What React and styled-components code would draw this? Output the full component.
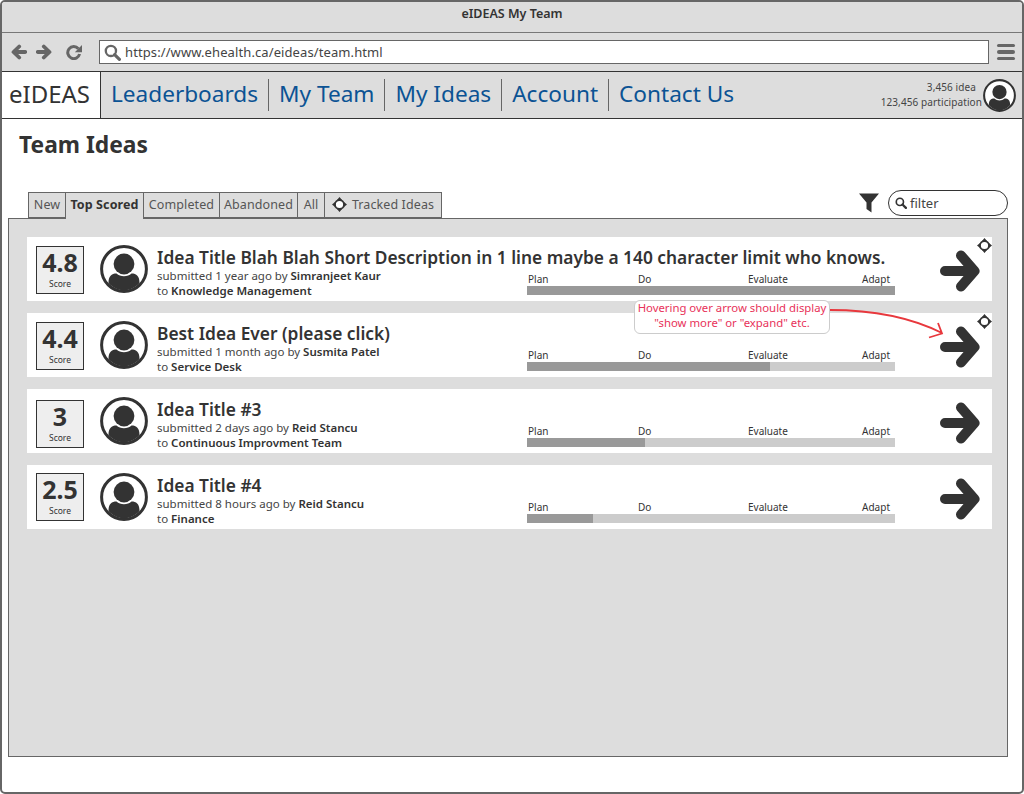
import React from "react";
import styled, { createGlobalStyle } from "styled-components";

const FONT = `"Noto Sans", "Open Sans", sans-serif`;

const IDEAS = [
  {
    score: "4.8",
    scoreTop: 9,
    title: "Idea Title Blah Blah Short Description in 1 line maybe a 140 character limit who knows.",
    when: "1 year ago",
    author: "Simranjeet Kaur",
    team: "Knowledge Management",
    progress: 100,
    tracked: true,
  },
  {
    score: "4.4",
    scoreTop: 9,
    title: "Best Idea Ever (please click)",
    when: "1 month ago",
    author: "Susmita Patel",
    team: "Service Desk",
    progress: 66,
    tracked: true,
  },
  {
    score: "3",
    scoreTop: 11,
    title: "Idea Title #3",
    when: "2 days ago",
    author: "Reid Stancu",
    team: "Continuous Improvment Team",
    progress: 32,
  },
  {
    score: "2.5",
    scoreTop: 8,
    title: "Idea Title #4",
    when: "8 hours ago",
    author: "Reid Stancu",
    team: "Finance",
    progress: 18,
  },
];

const TABS = [
  { label: "New", width: 38 },
  { label: "Top Scored", width: 79, active: true },
  { label: "Completed", width: 77 },
  { label: "Abandoned", width: 79 },
  { label: "All", width: 28 },
  { label: "Tracked Ideas", width: 118, icon: true },
];

const NAV_LINKS = ["Leaderboards", "My Team", "My Ideas", "Account", "Contact Us"];

const MoveIcon = () => (
  <svg width="15" height="15" viewBox="0 0 15 15">
    <circle cx="7.5" cy="7.5" r="4.500" fill="#fff" stroke="#333" strokeWidth="1.800" />
    <path d="M7.500 0l2.500 3.100H5zM7.500 15l2.500-3.100H5zM0 7.500l3.100-2.500v5zM15 7.500l-3.100-2.500v5z" fill="#333" />
  </svg>
);

const Avatar = ({ size }) => (
  <svg width={size} height={size} viewBox="0 0 48 48">
    <circle cx="24" cy="24" r="22.400" fill="#fff" stroke="#333" strokeWidth="3" />
    <circle cx="24" cy="19" r="10.400" fill="#333" />
    <path d="M8.500 38c0-7 3-9.500 8-9.500 2 1.800 4.600 2.700 7.500 2.700s5.500-.9 7.500-2.700c5 0 8 2.500 8 9.500-4 4.600-9.500 7.300-15.500 7.300S12.500 42.600 8.500 38z" fill="#333" />
  </svg>
);

const BigArrow = () => (
  <svg width="40" height="42" viewBox="0 0 40 42">
    <path
      d="M5 21H33M21 5.500L34.500 21L21 36.500"
      fill="none"
      stroke="#333"
      strokeWidth="10"
      strokeLinecap="round"
      strokeLinejoin="round"
    />
  </svg>
);

const BackIcon = () => (
  <svg width="16" height="16" viewBox="0 0 16 16">
    <path
      d="M14.200 8H3M8.200 2.500L2.500 8L8.200 13.500"
      fill="none"
      stroke="#666"
      strokeWidth="3.800"
      strokeLinecap="round"
      strokeLinejoin="round"
    />
  </svg>
);

const ForwardIcon = () => (
  <svg width="16" height="16" viewBox="0 0 16 16">
    <path
      d="M1.800 8H13M7.800 2.500L13.500 8L7.800 13.500"
      fill="none"
      stroke="#666"
      strokeWidth="3.800"
      strokeLinecap="round"
      strokeLinejoin="round"
    />
  </svg>
);

const RefreshIcon = () => (
  <svg width="16" height="16" viewBox="0 0 16 16">
    <path d="M12.400 4.800A6 6 0 1 0 13.600 10" fill="none" stroke="#666" strokeWidth="3" />
    <path d="M16 1v7.200H8.800z" fill="#666" />
  </svg>
);

const SearchIcon = ({ size, color }) => (
  <svg width={size} height={size} viewBox="0 0 16 16">
    <circle cx="6.500" cy="6.500" r="4.800" fill="none" stroke={color} strokeWidth="2.200" />
    <path d="M10 10l4.500 4.500" fill="none" stroke={color} strokeWidth="3" strokeLinecap="round" />
  </svg>
);

const FunnelIcon = () => (
  <svg width="20" height="20" viewBox="0 0 20 20">
    <path d="M0 .5H20L12.500 9.500V19.500L7.500 16V9.500z" fill="#333" />
  </svg>
);

const Idea = ({ idea }) => (
  <Row>
    <ScoreBox $top={idea.scoreTop}>
      <ScoreValue>{idea.score}</ScoreValue>
      <ScoreLabel>Score</ScoreLabel>
    </ScoreBox>
    <RowAvatar>
      <Avatar size={48} />
    </RowAvatar>
    <RowBody>
      <IdeaTitle>{idea.title}</IdeaTitle>
      <RowLower>
        <Meta>
          <div>
            submitted {idea.when} by <strong>{idea.author}</strong>
          </div>
          <div>
            to <strong>{idea.team}</strong>
          </div>
        </Meta>
        <Progress>
          <Stages>
            <span>Plan</span>
            <span>Do</span>
            <span>Evaluate</span>
            <span>Adapt</span>
          </Stages>
          <Track>
            <Fill style={{ width: `${idea.progress}%` }} />
          </Track>
        </Progress>
      </RowLower>
    </RowBody>
    <ArrowCell>
      <BigArrow />
    </ArrowCell>
    {idea.tracked && (
      <TrackBadge>
        <MoveIcon />
      </TrackBadge>
    )}
  </Row>
);

export default function App() {
  return (
    <>
      <GlobalStyle />
      <Browser>
        <TitleBar>eIDEAS My Team</TitleBar>
        <AddressRow>
          <ToolIcon $after={9}>
            <BackIcon />
          </ToolIcon>
          <ToolIcon $after={14}>
            <ForwardIcon />
          </ToolIcon>
          <ToolIcon $after={17}>
            <RefreshIcon />
          </ToolIcon>
          <AddressBar>
            <SearchIcon size={17} color="#666" />
            https://www.ehealth.ca/eideas/team.html
          </AddressBar>
          <Burger>
            <span />
            <span />
            <span />
          </Burger>
        </AddressRow>
        <NavBar>
          <Brand>eIDEAS</Brand>
          <NavLinks>
            {NAV_LINKS.map((link) => (
              <NavLink key={link}>{link}</NavLink>
            ))}
          </NavLinks>
          <Stats>
            <StatIdea>3,456 idea</StatIdea>
            <div>123,456 participation</div>
          </Stats>
          <Avatar size={33} />
        </NavBar>
        <Content>
          <PageTitle>Team Ideas</PageTitle>
          <TabBar>
            <Tabs>
              {TABS.map((tab) => (
                <Tab key={tab.label} $width={tab.width} $active={tab.active}>
                  {tab.icon && <MoveIcon />}
                  {tab.label}
                </Tab>
              ))}
            </Tabs>
            <FilterBox>
              <FunnelIcon />
              <FilterInput>
                <SearchIcon size={12} color="#333" />
                filter
              </FilterInput>
            </FilterBox>
          </TabBar>
          <Panel>
            {IDEAS.map((idea) => (
              <Idea key={idea.title} idea={idea} />
            ))}
            <Note>
              <NoteText>
                Hovering over arrow should display
                <br />
                "show more" or "expand" etc.
              </NoteText>
            </Note>
            <NoteArrow width="116" height="34" viewBox="0 0 116 34">
              <path
                d="M0 2C40 2 80 9 112 25M99 29.500L112 25.500L108 15"
                fill="none"
                stroke="#e8383d"
                strokeWidth="1.800"
              />
            </NoteArrow>
          </Panel>
        </Content>
      </Browser>
    </>
  );
}

const GlobalStyle = createGlobalStyle`
  html, body {
    margin: 0;
    padding: 0;
    background: #fff;
  }
  body {
    font-family: ${FONT};
    color: #333;
  }
`;

const Browser = styled.div`
  box-sizing: border-box;
  width: 1024px;
  height: 794px;
  border: 2px solid #666;
  border-radius: 5px;
  overflow: hidden;
`;

const TitleBar = styled.div`
  height: 31px;
  padding-bottom: 8px;
  box-sizing: border-box;
  background: #ddd;
  border-bottom: 1px solid #777;
  display: flex;
  align-items: center;
  justify-content: center;
  font-size: 12.500px;
  font-weight: 600;
`;

const AddressRow = styled.div`
  height: 38px;
  box-sizing: border-box;
  background: #ddd;
  display: flex;
  align-items: center;
  padding: 0 7px 0 9px;
`;

const ToolIcon = styled.div`
  width: 16px;
  height: 16px;
  line-height: 0;
  margin-right: ${({ $after }) => $after}px;
  flex: none;
`;

const AddressBar = styled.div`
  flex: 1;
  height: 24px;
  box-sizing: border-box;
  margin-right: 8px;
  background: #fff;
  border: 1px solid #666;
  display: flex;
  align-items: center;
  gap: 4px;
  padding: 0 4px;
  font-size: 13px;
  letter-spacing: 0.1px;
  color: #444;
`;

const Burger = styled.div`
  width: 18px;
  display: flex;
  flex-direction: column;
  gap: 3px;

  span {
    height: 3.500px;
    border-radius: 2px;
    background: #666;
  }
`;

const NavBar = styled.nav`
  height: 48px;
  box-sizing: border-box;
  background: #ddd;
  border-top: 1px solid #333;
  border-bottom: 1px solid #333;
  display: flex;
  align-items: center;
  padding-right: 6px;
`;

const Brand = styled.div`
  width: 100px;
  height: 100%;
  box-sizing: border-box;
  background: #fff;
  border-right: 1px solid #333;
  margin-left: -1px;
  padding: 0 2px 3px 0;
  display: flex;
  align-items: center;
  justify-content: center;
  font-size: 24px;
  color: #333;
`;

const NavLinks = styled.div`
  flex: 1;
  display: flex;
  align-items: center;
`;

const NavLink = styled.a`
  height: 32px;
  box-sizing: border-box;
  padding: 0 10px 4px;
  display: flex;
  align-items: center;
  font-size: 22.600px;
  color: #0b5394;
  border-right: 1px solid #666;

  &:last-child {
    border-right: 0;
  }
`;

const Stats = styled.div`
  font-size: 10px;
  letter-spacing: 0.1px;
  line-height: 15.500px;
  text-align: right;
  margin-right: 1px;
  color: #444;
`;

const StatIdea = styled.div`
  padding-right: 6px;
`;

const Content = styled.main`
  padding: 0 14px 0 6px;
`;

const PageTitle = styled.h1`
  margin: 0;
  padding: 11px 0 0 11px;
  height: 71px;
  box-sizing: border-box;
  font-size: 22.800px;
  line-height: 30px;
  font-weight: 700;
  color: #333;
`;

const TabBar = styled.div`
  height: 28px;
  display: flex;
  align-items: flex-end;
  justify-content: space-between;
  padding-left: 21px;
`;

const Tabs = styled.div`
  display: flex;
  position: relative;
  z-index: 1;
`;

const Tab = styled.div`
  width: ${({ $width }) => $width}px;
  height: ${({ $active }) => ($active ? 27 : 26)}px;
  margin-bottom: ${({ $active }) => ($active ? -1 : 0)}px;
  box-sizing: border-box;
  background: #ddd;
  border: 1px solid #666;
  border-bottom: ${({ $active }) => ($active ? "0" : "1px solid #666")};
  margin-left: -1px;
  padding-bottom: ${({ $active }) => ($active ? 3 : 1)}px;
  display: flex;
  align-items: center;
  justify-content: center;
  gap: 5px;
  font-size: 12.500px;
  letter-spacing: 0.1px;
  font-weight: ${({ $active }) => ($active ? 700 : 400)};
  color: ${({ $active }) => ($active ? "#333" : "#555")};
  white-space: nowrap;
`;

const FilterBox = styled.div`
  display: flex;
  align-items: center;
  gap: 9px;
  margin-bottom: 2px;
`;

const FilterInput = styled.div`
  width: 120px;
  height: 26px;
  box-sizing: border-box;
  border: 1px solid #333;
  border-radius: 13px;
  background: #fff;
  display: flex;
  align-items: center;
  gap: 3px;
  padding: 0 6px 1px;
  font-size: 13px;
  color: #444;
`;

const Panel = styled.section`
  position: relative;
  height: 539px;
  box-sizing: border-box;
  background: #ddd;
  border: 1px solid #666;
  padding: 18px 15px 0 18px;
  display: flex;
  flex-direction: column;
  gap: 12px;
`;

const Row = styled.article`
  position: relative;
  height: 64px;
  background: #fff;
  display: flex;
  padding-left: 9px;
`;

const ScoreBox = styled.div`
  width: 48px;
  height: 48px;
  margin-top: ${({ $top }) => $top}px;
  box-sizing: border-box;
  background: #eee;
  border: 1px solid #333;
  display: flex;
  flex-direction: column;
  align-items: center;
  flex: none;
`;

const ScoreValue = styled.div`
  font-size: 25px;
  line-height: 30px;
  font-weight: 700;
`;

const ScoreLabel = styled.div`
  font-size: 8.500px;
  line-height: 11px;
  margin-top: 1px;
`;

const RowAvatar = styled.div`
  margin: 8px 9px 0 16px;
  flex: none;
  line-height: 0;
`;

const RowBody = styled.div`
  width: 738px;
  flex: none;
`;

const IdeaTitle = styled.h2`
  margin: 8px 0 0;
  font-size: 17.330px;
  line-height: 24px;
  font-weight: 600;
  white-space: nowrap;
  color: #333;
`;

const RowLower = styled.div`
  display: flex;
  justify-content: space-between;
`;

const Meta = styled.div`
  font-size: 11.500px;
  line-height: 15px;
  margin-top: -1px;
  color: #444;

  strong {
    font-weight: 600;
    color: #333;
  }
`;

const Progress = styled.div`
  width: 368px;
  margin-top: 3px;
`;

const Stages = styled.div`
  display: grid;
  grid-template-columns: 110px 110px 1fr auto;
  padding: 0 5px 0 1px;
  font-size: 10px;
  line-height: 14px;
  color: #333;
`;

const Track = styled.div`
  height: 9px;
  background: #ccc;
`;

const Fill = styled.div`
  height: 100%;
  background: #999;
`;

const ArrowCell = styled.div`
  margin: 13px 0 0 45px;
  line-height: 0;
`;

const TrackBadge = styled.div`
  position: absolute;
  top: 1px;
  right: 0;
  line-height: 0;
`;

const Note = styled.div`
  position: absolute;
  left: 625px;
  top: 81px;
  width: 196px;
  height: 34px;
  box-sizing: border-box;
  background: #fff;
  border: 1px solid #ccc;
  border-radius: 6px;
  font-size: 11.350px;
  line-height: 15px;
  text-align: center;
  white-space: nowrap;
  color: #e8335a;
`;

const NoteText = styled.div`
  margin-top: -1px;
`;

const NoteArrow = styled.svg`
  position: absolute;
  left: 821px;
  top: 89px;
`;
